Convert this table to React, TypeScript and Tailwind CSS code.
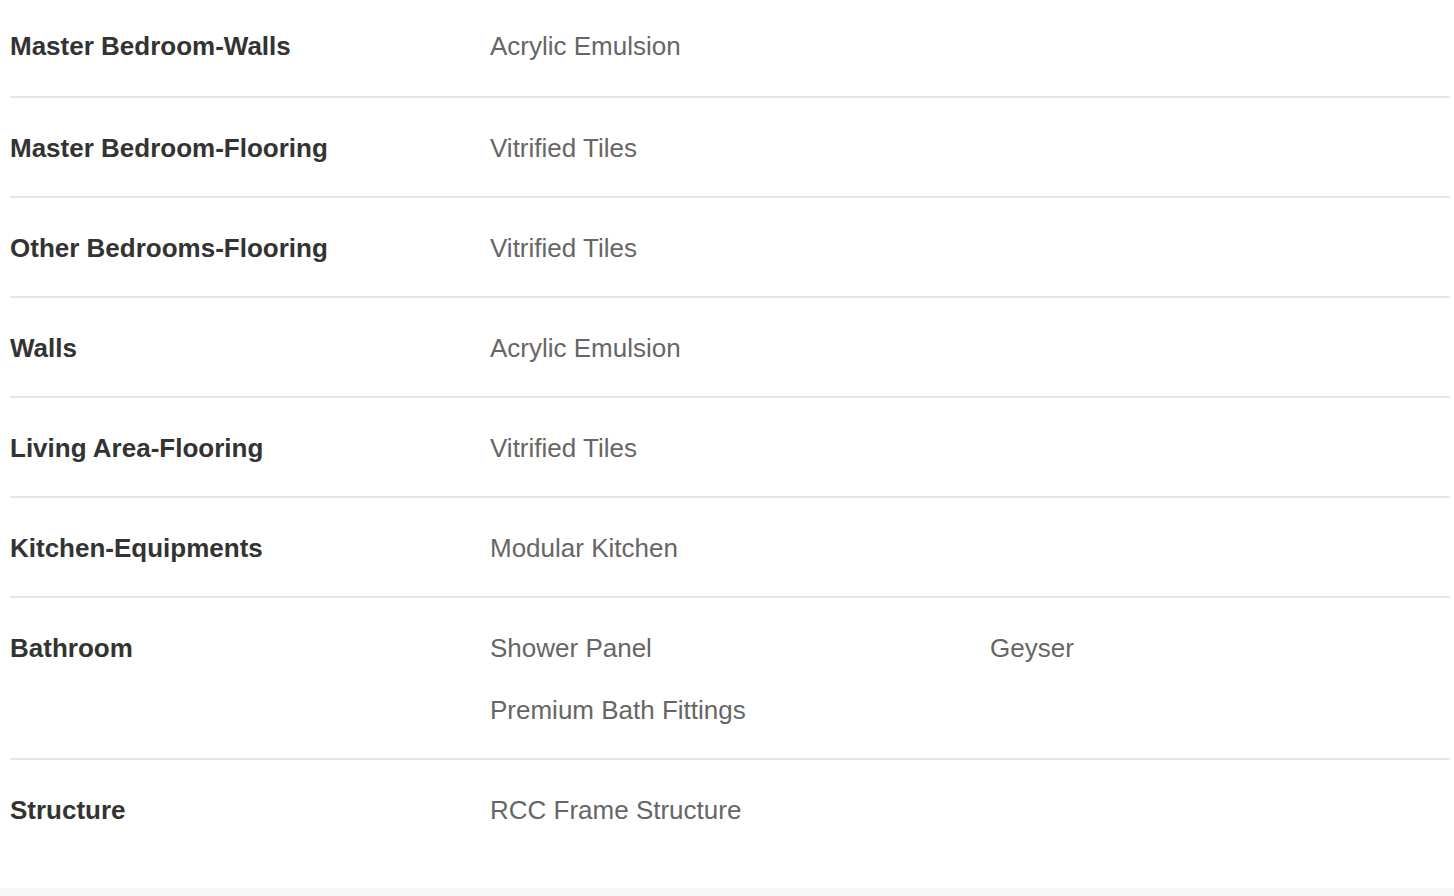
const specs: { label: string; values: string[] }[] = [
  { label: "Master Bedroom-Walls", values: ["Acrylic Emulsion"] },
  { label: "Master Bedroom-Flooring", values: ["Vitrified Tiles"] },
  { label: "Other Bedrooms-Flooring", values: ["Vitrified Tiles"] },
  { label: "Walls", values: ["Acrylic Emulsion"] },
  { label: "Living Area-Flooring", values: ["Vitrified Tiles"] },
  { label: "Kitchen-Equipments", values: ["Modular Kitchen"] },
  {
    label: "Bathroom",
    values: ["Shower Panel", "Geyser", "Premium Bath Fittings"],
  },
  { label: "Structure", values: ["RCC Frame Structure"] },
];

function SpecRow(props: { label: string; values: string[]; first: boolean }) {
  return (
    <div
      className={
        props.first
          ? "flex pt-[31px] pb-[35px]"
          : "flex pt-[35px] pb-[33px] border-t-2 border-[#e6e6e6]"
      }
    >
      <div className="w-[480px] shrink-0 font-bold text-[#333333]">
        {props.label}
      </div>
      <div className="grid grid-cols-[500px_500px] gap-y-[32px] text-[#666666]">
        {props.values.map((v) => (
          <div key={v}>{v}</div>
        ))}
      </div>
    </div>
  );
}

export default function App() {
  return (
    <div className="bg-white min-h-[896px] flex flex-col font-['Liberation_Sans',Arial,sans-serif] text-[26px] leading-[30px]">
      <div className="pl-[10px] pr-[4px] pb-[30px]">
        {specs.map((s, i) => (
          <SpecRow key={s.label} label={s.label} values={s.values} first={i === 0} />
        ))}
      </div>
      <div className="flex-1 bg-[#f5f6f8]"></div>
    </div>
  );
}
